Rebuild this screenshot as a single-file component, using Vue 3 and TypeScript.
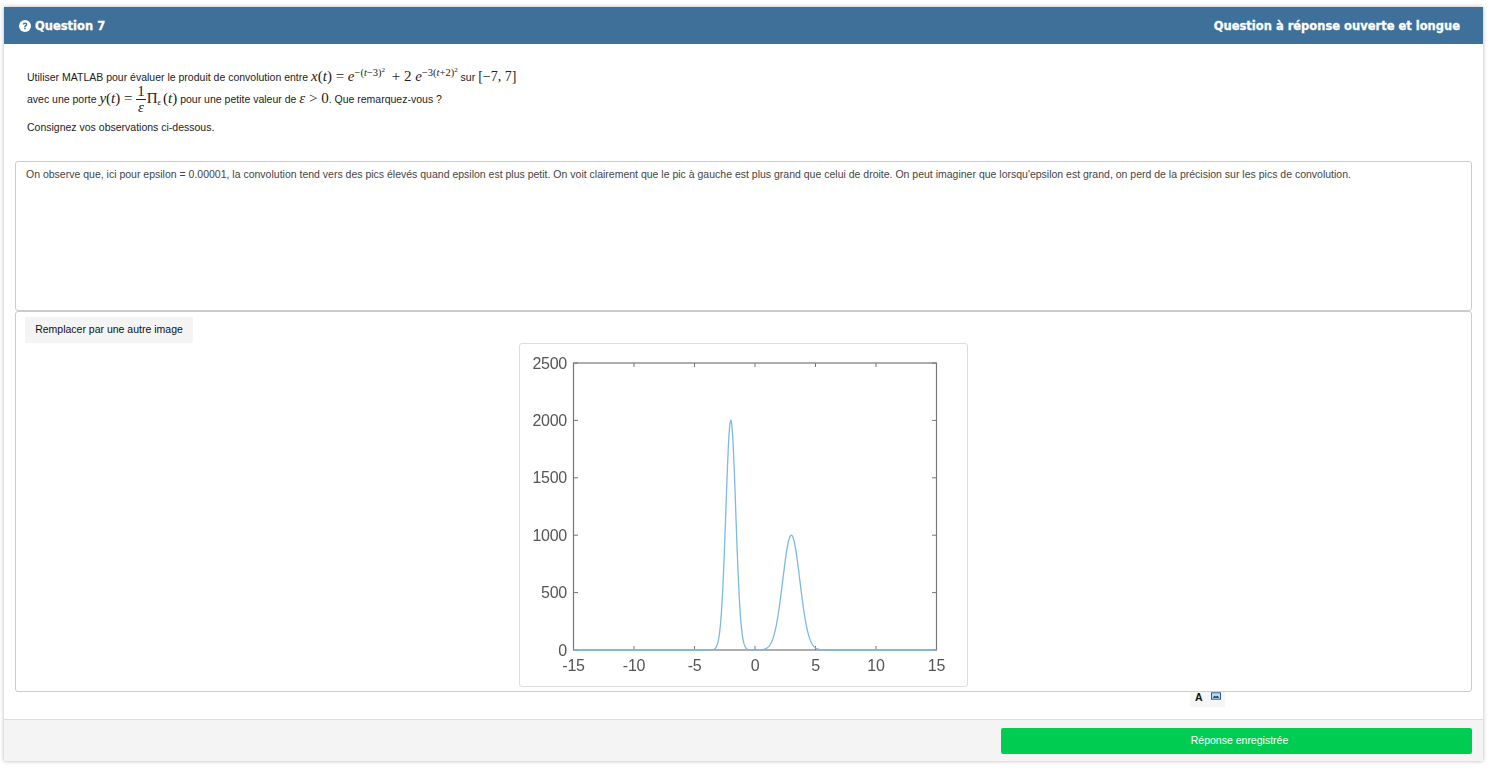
<template>
  <div class="page">
    <section class="card">
      <header class="card-head">
        <span class="head-left">
          <svg class="help-icon" viewBox="0 0 24 24" aria-hidden="true">
            <circle cx="12" cy="12" r="12" fill="#fff" />
            <path
              d="M7.6 9.2C7.8 6.6 9.6 5 12.2 5c2.6 0 4.4 1.6 4.4 3.8 0 1.7-.9 2.6-2.1 3.4-1 .7-1.2 1-1.2 2.1h-2.9c0-1.9.5-2.7 1.8-3.6.9-.6 1.4-1 1.4-1.8 0-.8-.6-1.3-1.5-1.3-1 0-1.6.6-1.7 1.6H7.6z"
              fill="#3e7099"
            />
            <rect x="10.4" y="15.6" width="2.9" height="2.9" fill="#3e7099" />
          </svg>
          Question 7
        </span>
        <span class="head-right">Question à réponse ouverte et longue</span>
      </header>

      <div class="statement">
        <p class="line">
          Utiliser MATLAB pour évaluer le produit de convolution entre
          <span class="math"><i>x</i>(<i>t</i>) = <i>e</i><sup class="exp-first">−(<i>t</i>−3)<sup>2</sup></sup> + 2 <i>e</i><sup>−3(<i>t</i>+2)<sup>2</sup></sup></span>
          sur <span class="math math-range">[−7, 7]</span>
        </p>
        <p class="line line-frac">
          avec une porte
          <span class="math"><i>y</i>(<i>t</i>) =
            <span class="frac"><span class="num">1</span><span class="den"><i>ε</i></span></span>Π<sub><i>ε</i></sub>(<i>t</i>)</span>
          pour une petite valeur de <span class="math"><i>ε</i> &gt; 0</span>. Que remarquez-vous ?
        </p>
        <p class="line line-last">Consignez vos observations ci-dessous.</p>
      </div>

      <div class="answer">{{ answer }}</div>

      <div class="image-box">
        <button class="replace-btn" type="button">Remplacer par une autre image</button>
        <div class="image-wrap">
          <div class="plot">
            <svg width="447" height="342" viewBox="0 0 447 342">
              <rect x="53.5" y="19" width="363" height="287" fill="#fff" stroke="#777" stroke-width="1.2" />
              <g stroke="#777" stroke-width="1">
                <line v-for="t in xTicks" :key="'xb' + t" :x1="xPos(t)" y1="306" :x2="xPos(t)" y2="302" />
                <line v-for="t in xTicks" :key="'xt' + t" :x1="xPos(t)" y1="19" :x2="xPos(t)" y2="23" />
                <line v-for="t in yTicks" :key="'yl' + t" x1="54" :y1="yPos(t)" x2="58" :y2="yPos(t)" />
                <line v-for="t in yTicks" :key="'yr' + t" x1="416" :y1="yPos(t)" x2="412" :y2="yPos(t)" />
              </g>
              <path :d="curve" fill="none" stroke="#7cb9e4" stroke-width="1.3" />
              <g class="tick-text">
                <text v-for="t in xTicks" :key="'xl' + t" :x="xPos(t)" y="327" text-anchor="middle">{{ t }}</text>
                <text v-for="t in yTicks" :key="'yt' + t" x="47" :y="yPos(t) + 5.5" text-anchor="end">{{ t }}</text>
              </g>
            </svg>
          </div>
        </div>
      </div>

      <div class="tool-row">
        <div class="tools">
          <span class="tool-a">A</span>
          <svg class="tool-img" viewBox="0 0 11 8" aria-hidden="true">
            <rect x="0.5" y="0.5" width="10" height="7" fill="#bfe0f5" stroke="#1f4e79" />
            <path d="M2 6l2-2.5 1.5 1.5L7 3.5 9 6z" fill="#12263a" />
          </svg>
        </div>
      </div>

      <footer class="card-foot">
        <button class="save-btn" type="button">Réponse enregistrée</button>
      </footer>
    </section>
  </div>
</template>

<script setup lang="ts">
import { computed } from 'vue'

const answer =
  "On observe que, ici pour epsilon = 0.00001, la convolution tend vers des pics élevés quand epsilon est plus petit. On voit clairement que le pic à gauche est plus grand que celui de droite. On peut imaginer que lorsqu'epsilon est grand, on perd de la précision sur les pics de convolution."

const xTicks = [-15, -10, -5, 0, 5, 10, 15]
const yTicks = [0, 500, 1000, 1500, 2000, 2500]

const xPos = (t: number) => 53.5 + ((t + 15) / 30) * 363
const yPos = (v: number) => 306 - (v / 2500) * 287

// convolution result, sampled finely so the narrow peak stays smooth
const curve = computed(() => {
  const pts: string[] = []
  for (let t = -15; t <= 15; t += 0.02) {
    const v = 1000 * Math.exp(-((t - 3) ** 2)) + 2000 * Math.exp(-3 * (t + 2) ** 2)
    pts.push(`${xPos(t).toFixed(2)},${yPos(v).toFixed(2)}`)
  }
  return 'M' + pts.join('L')
})
</script>

<style>
html,
body {
  background: #fff;
}
</style>

<style scoped>
.page {
  width: 1493px;
  height: 771px;
  padding: 7px 10px 0 4px;
  box-sizing: border-box;
  font-family: 'Liberation Sans', Arial, sans-serif;
  font-size: 10.5px;
  color: #222;
  overflow: hidden;
}

.card {
  width: 1479px;
  height: 754px;
  display: flex;
  flex-direction: column;
  background: #fff;
  box-shadow: 0 0 4px rgba(0, 0, 0, 0.3);
}

.card-head {
  height: 37px;
  flex: none;
  display: flex;
  align-items: center;
  justify-content: space-between;
  padding: 0 23px 0 15px;
  background: #3e7099;
  color: #fff;
  font-family: 'DejaVu Sans', sans-serif;
  font-weight: 700;
  font-size: 11.5px;
  -webkit-text-stroke: 0.3px #fff;
}

.head-left {
  display: flex;
  align-items: center;
  gap: 4px;
}

.help-icon {
  width: 12px;
  height: 12px;
}

.statement {
  padding: 22px 23px 0;
  height: 117px;
  box-sizing: border-box;
  flex: none;
}

.line {
  margin: 0;
  line-height: 20px;
  color: #222;
  white-space: nowrap;
}

.line-frac {
  height: 26px;
  line-height: 26px;
  margin-top: -3px;
}

.line-last {
  margin-top: 7px;
}

.math {
  font-family: 'Liberation Serif', serif;
  font-size: 15px;
  color: #222;
}

.math-range {
  font-size: 14px;
}

.math sup {
  font-size: 10.5px;
  line-height: 0;
  vertical-align: 5px;
}

.math sup sup {
  font-size: 7px;
  vertical-align: 4px;
}

.math sub {
  font-size: 9px;
  line-height: 0;
  vertical-align: -2px;
  margin-right: 2px;
}

.exp-first {
  margin-right: 3px;
}

.frac {
  display: inline-flex;
  flex-direction: column;
  align-items: center;
  vertical-align: middle;
  line-height: 15px;
  margin-right: 1px;
}

.num {
  border-bottom: 1px solid #222;
  padding: 0 1px;
}

.answer {
  margin: 0 11px;
  height: 150px;
  box-sizing: border-box;
  flex: none;
  padding: 6px 10px;
  border: 1px solid #ccc;
  border-radius: 3px;
  line-height: 12px;
  color: #444;
  white-space: nowrap;
  overflow: hidden;
}

.image-box {
  margin: 0 11px;
  height: 381px;
  box-sizing: border-box;
  flex: none;
  padding: 5px 9px;
  border: 1px solid #ccc;
  border-radius: 3px;
}

.replace-btn {
  display: block;
  width: 168px;
  height: 26px;
  padding: 0 0 2px;
  border: 0;
  border-radius: 2px;
  background: #f4f4f4;
  color: #111;
  font: 10.5px 'Liberation Sans', Arial, sans-serif;
}

.image-wrap {
  display: flex;
  justify-content: center;
}

.plot {
  width: 449px;
  height: 344px;
  box-sizing: border-box;
  border: 1px solid #ddd;
  border-radius: 3px;
}

.plot svg {
  display: block;
  filter: blur(0.5px);
}

.tick-text {
  font-family: 'Liberation Sans', Arial, sans-serif;
  font-size: 16px;
  letter-spacing: -0.25px;
  fill: #555;
}

.tool-row {
  display: flex;
  justify-content: flex-end;
  padding-right: 258px;
  height: 27px;
  flex: none;
}

.tools {
  width: 35px;
  height: 15px;
  box-sizing: border-box;
  padding-left: 5px;
  display: flex;
  align-items: flex-start;
  gap: 8px;
  background: #f6f6f6;
}

.tool-a {
  font-weight: 700;
  font-size: 10.5px;
  line-height: 10px;
  color: #111;
}

.tool-img {
  width: 10px;
  height: 8px;
}

.card-foot {
  flex: 1;
  display: flex;
  justify-content: flex-end;
  align-items: flex-start;
  padding: 8px 11px 0 0;
  background: #f4f4f4;
  border-top: 1px solid #ddd;
}

.save-btn {
  width: 471px;
  height: 26px;
  padding: 0 0 2px 6px;
  border: 0;
  border-radius: 2px;
  background: #00cc52;
  color: #fff;
  font: 10.5px 'Liberation Sans', Arial, sans-serif;
}
</style>
